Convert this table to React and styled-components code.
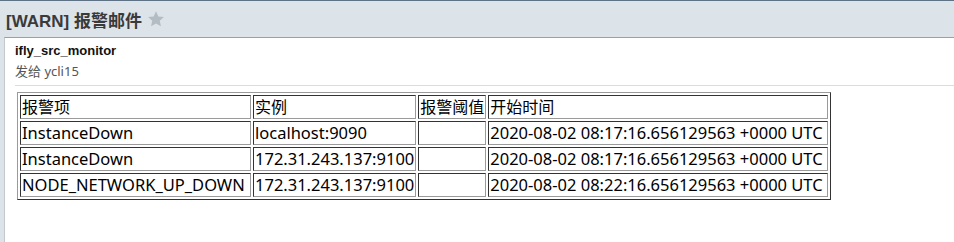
import React from "react";
import styled, { createGlobalStyle } from "styled-components";

const Global = createGlobalStyle`
  html, body { margin: 0; padding: 0; background: #dce3e9; }
  body { font-family: "Liberation Sans", "Noto Sans CJK SC", sans-serif; }
`;

const Page = styled.div`
  border-top: 1px solid #5f7184;
  background: #dce3e9;
  display: flex;
  flex-direction: column;
  box-sizing: border-box;
  height: 100vh;
`;

const Header = styled.div`
  height: 36px;
  display: flex;
  align-items: center;
  padding-left: 6px;
  gap: 5px;
`;

const Title = styled.h1`
  margin: 0;
  font-size: 17px;
  font-weight: bold;
  color: #3a3a3a;
  font-family: "Liberation Sans", "Noto Sans CJK SC", sans-serif;
`;

const Panel = styled.div`
  flex: 1;
  margin-left: 4px;
  background: #fff;
  border-left: 1px solid #c3c8cd;
  border-top: 1px solid #9aa0a6;
`;

const Meta = styled.div`
  padding: 3px 10px 4px;
  font-size: 13px;
  line-height: 20px;
`;

const Sender = styled.div`
  font-weight: bold;
  color: #111;
`;

const Recipient = styled.div`
  color: #555;
  font-family: "Noto Sans", "Noto Sans CJK SC", sans-serif;
`;

const Divider = styled.div`
  margin-left: 10px;
  height: 1px;
  background: #dcdcdc;
`;

const Content = styled.div`
  padding: 6px 0 0 12px;
`;

const Table = styled.table`
  border: 1px solid;
  border-color: #9a9a9a #333 #333 #9a9a9a;
  border-spacing: 2px;
  font-family: "Noto Sans", "Noto Sans CJK SC", sans-serif;
  color: #000;
`;

const Cell = styled.td`
  box-sizing: border-box;
  width: ${(p) => p.$w}px;
  height: 24px;
  padding: 0 1px;
  border: 1px solid;
  border-color: #333 #9a9a9a #9a9a9a #333;
  font-size: ${(p) => (p.$head ? "16px" : "16.5px")};
  line-height: 20px;
  white-space: nowrap;
  overflow: hidden;
  vertical-align: middle;
`;

const Star = () => (
  <svg width="18" height="18" viewBox="0 0 24 24" aria-hidden="true">
    <path
      d="M12 1.8l3.1 6.8 7.4.8-5.5 5 1.6 7.3L12 17.9l-6.6 3.8 1.6-7.3-5.5-5 7.4-.8z"
      fill="#b3bbc3"
    />
  </svg>
);

const widths = [231, 160, 67, 340];
const head = ["报警项", "实例", "报警阈值", "开始时间"];
const rows = [
  ["InstanceDown", "localhost:9090", "", "2020-08-02 08:17:16.656129563 +0000 UTC"],
  ["InstanceDown", "172.31.243.137:9100", "", "2020-08-02 08:17:16.656129563 +0000 UTC"],
  ["NODE_NETWORK_UP_DOWN", "172.31.243.137:9100", "", "2020-08-02 08:22:16.656129563 +0000 UTC"],
];

export default function App() {
  return (
    <>
      <Global />
      <Page>
        <Header>
          <Title>[WARN] 报警邮件</Title>
          <Star />
        </Header>
        <Panel>
          <Meta>
            <Sender>ifly_src_monitor</Sender>
            <Recipient>发给 ycli15</Recipient>
          </Meta>
          <Divider />
          <Content>
            <Table>
              <tbody>
                <tr>
                  {head.map((h, i) => (
                    <Cell key={i} $w={widths[i]} $head>{h}</Cell>
                  ))}
                </tr>
                {rows.map((r, ri) => (
                  <tr key={ri}>
                    {r.map((c, ci) => (
                      <Cell key={ci} $w={widths[ci]}>{c}</Cell>
                    ))}
                  </tr>
                ))}
              </tbody>
            </Table>
          </Content>
        </Panel>
      </Page>
    </>
  );
}
